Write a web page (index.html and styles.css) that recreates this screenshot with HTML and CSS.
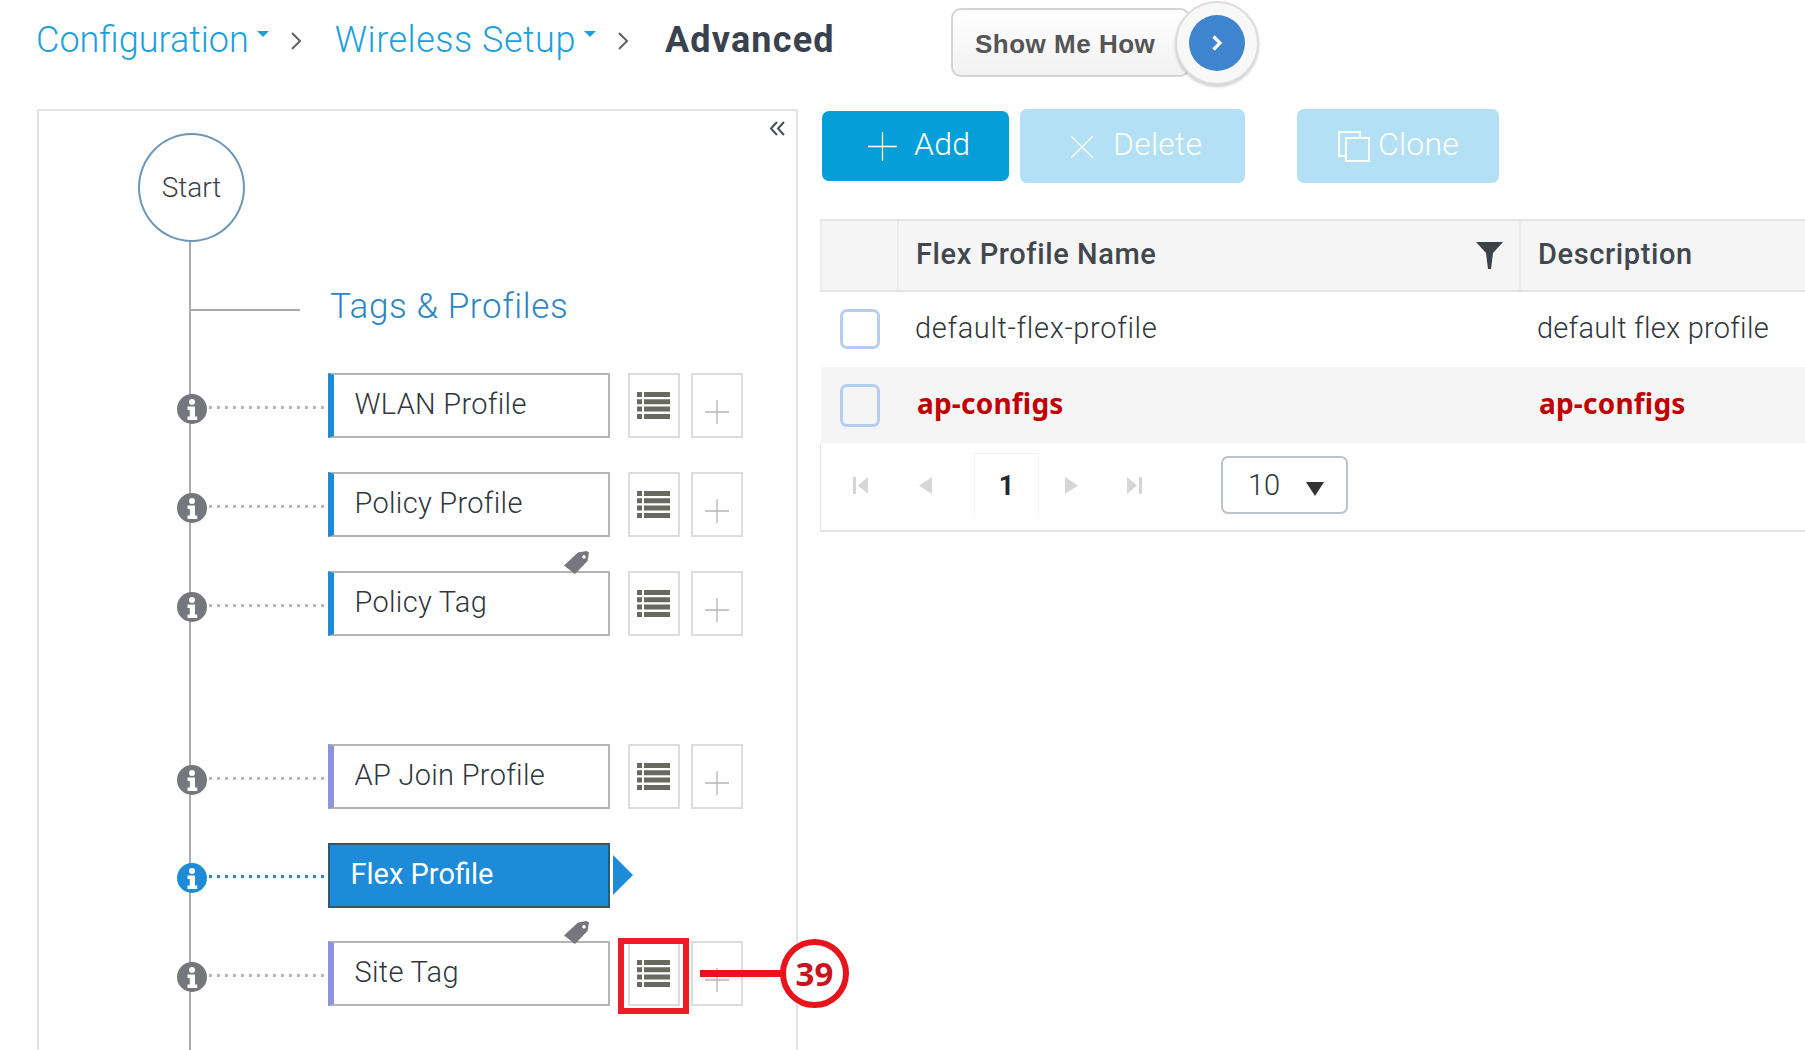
FILE: index.html
```html
<!DOCTYPE html>
<html lang="en">
<head>
<meta charset="UTF-8">
<title>Flex Profile</title>
<link rel="stylesheet" href="styles.css">
</head>

<body>

<svg class="defs">
    <defs>
        <symbol id="ico-info" viewBox="0 0 30 30">
            <circle cx="15" cy="15" r="15"/>
            <circle cx="15" cy="8" r="3" fill="#fff"/>
            <path d="M10.5 12.5h7.5v10h2.2v3.5h-9.700v-3.500h2.300v-6.500h-2.300z" fill="#fff"/>
        </symbol>
        <symbol id="ico-list" viewBox="0 0 33 27">
            <path d="M0 0h5v5H0zM7 0h26v5H7zM0 7.300h5v5H0zM7 7.300h26v5H7zM0 14.600h5v5H0zM7 14.600h26v5H7zM0 22h5v5H0zM7 22h26v5H7z"/>
        </symbol>
        <symbol id="ico-plus" viewBox="0 0 24 24">
            <path d="M12 0v24M0 12h24" fill="none" stroke="currentColor" stroke-width="1.300"/>
        </symbol>
        <symbol id="ico-tag" viewBox="0 0 25 23">
            <path d="M14 1.500 22.500 0 25 1.500 23.500 10 11 23 0 14.500zM20 4a1.800 1.800 0 1 0 .01 0z" fill-rule="evenodd"/>
        </symbol>
    </defs>
</svg>

<header class="topbar">
    <nav class="crumbs">
        <a class="crumb-link">Configuration</a><span class="caret"></span>
        <svg class="crumb-sep" viewBox="0 0 12 18"><path d="M2 1l8 8-8 8" fill="none" stroke="#5f6368" stroke-width="2"/></svg>
        <a class="crumb-link crumb-wide">Wireless Setup</a><span class="caret"></span>
        <svg class="crumb-sep" viewBox="0 0 12 18"><path d="M2 1l8 8-8 8" fill="none" stroke="#5f6368" stroke-width="2"/></svg>
        <span class="crumb-current">Advanced</span>
    </nav>
    <div class="howto">
        <span class="howto-label">Show Me How</span>
        <span class="howto-ring">
            <span class="howto-dot">
                <svg viewBox="0 0 12 16" width="12" height="16"><path d="M2.500 1.500 9 8l-6.500 6.500" fill="none" stroke="#fff" stroke-width="3.200"/></svg>
            </span>
        </span>
    </div>
</header>

<main class="layout">

    <!-- Left tree -->
    <section class="tree">
        <svg class="collapse" viewBox="0 0 17 15"><path d="M8 1 2 7.500 8 14M15 1 9 7.500 15 14" fill="none" stroke="#4a4f55" stroke-width="2"/></svg>
        <div class="start">Start</div>
        <div class="trunk">
            <div class="branch">
                <span class="branch-line"></span>
                <span class="branch-title">Tags &amp; Profiles</span>
            </div>

            <div class="group">
                <div class="row">
                    <svg class="info"><use href="#ico-info"/></svg>
                    <span class="dots"></span>
                    <div class="node node-blue">WLAN Profile</div>
                    <div class="tool"><svg class="ico-list"><use href="#ico-list"/></svg></div>
                    <div class="tool tool-plus"><svg class="ico-plus"><use href="#ico-plus"/></svg></div>
                </div>
                <div class="row">
                    <svg class="info"><use href="#ico-info"/></svg>
                    <span class="dots"></span>
                    <div class="node node-blue">Policy Profile</div>
                    <div class="tool"><svg class="ico-list"><use href="#ico-list"/></svg></div>
                    <div class="tool tool-plus"><svg class="ico-plus"><use href="#ico-plus"/></svg></div>
                </div>
                <div class="row">
                    <svg class="info"><use href="#ico-info"/></svg>
                    <span class="dots"></span>
                    <div class="node node-blue">Policy Tag<svg class="tag"><use href="#ico-tag"/></svg></div>
                    <div class="tool"><svg class="ico-list"><use href="#ico-list"/></svg></div>
                    <div class="tool tool-plus"><svg class="ico-plus"><use href="#ico-plus"/></svg></div>
                </div>
            </div>

            <div class="group group-second">
                <div class="row">
                    <svg class="info"><use href="#ico-info"/></svg>
                    <span class="dots"></span>
                    <div class="node node-violet">AP Join Profile</div>
                    <div class="tool"><svg class="ico-list"><use href="#ico-list"/></svg></div>
                    <div class="tool tool-plus"><svg class="ico-plus"><use href="#ico-plus"/></svg></div>
                </div>
                <div class="row row-active">
                    <svg class="info"><use href="#ico-info"/></svg>
                    <span class="dots"></span>
                    <div class="node node-active">Flex Profile</div>
                    <span class="node-arrow"></span>
                </div>
                <div class="row">
                    <svg class="info"><use href="#ico-info"/></svg>
                    <span class="dots"></span>
                    <div class="node node-violet">Site Tag<svg class="tag"><use href="#ico-tag"/></svg></div>
                    <div class="tool tool-marked"><svg class="ico-list"><use href="#ico-list"/></svg></div>
                    <div class="tool tool-plus"><svg class="ico-plus"><use href="#ico-plus"/></svg></div>
                    <div class="callout">
                        <span class="callout-line"></span>
                        <span class="callout-num">39</span>
                    </div>
                </div>
            </div>
        </div>
    </section>

    <!-- Right table -->
    <section class="pane">
        <div class="toolbar">
            <button class="btn btn-add">
                <svg class="btn-ico-add" viewBox="0 0 29 29"><path d="M14.500 0v29M0 14.500h29" fill="none" stroke="#fff" stroke-width="1.300"/></svg>Add
            </button>
            <button class="btn btn-off btn-delete">
                <svg class="btn-ico-del" viewBox="0 0 24 22"><path d="M1 0l22 22M23 0 1 22" fill="none" stroke="#fff" stroke-width="1.300"/></svg>Delete
            </button>
            <button class="btn btn-off btn-clone">
                <svg class="btn-ico-clone" viewBox="0 0 32 31"><path d="M8 7h23v23H8zM8 25H1V1h21v6" fill="none" stroke="#fff" stroke-width="2"/></svg>Clone
            </button>
        </div>

        <table class="grid">
            <colgroup>
                <col class="col-check">
                <col class="col-name">
                <col>
            </colgroup>
            <thead>
                <tr>
                    <th></th>
                    <th>
                        <div class="th-inner">Flex Profile Name
                            <svg class="filter" viewBox="0 0 27 27"><path d="M0 0h27L17 11l-2 16h-3l-2-16z"/></svg>
                        </div>
                    </th>
                    <th>Description</th>
                </tr>
            </thead>
            <tbody>
                <tr class="row-plain">
                    <td><span class="check"></span></td>
                    <td>default-flex-profile</td>
                    <td class="td-desc">default flex profile</td>
                </tr>
                <tr class="row-hit">
                    <td><span class="check check-tall"></span></td>
                    <td class="hit">ap-configs</td>
                    <td class="hit">ap-configs</td>
                </tr>
            </tbody>
        </table>

        <div class="pager">
            <svg class="pg pg-first" viewBox="0 0 15 17"><path d="M0 0h3v17H0zM15 0v17L5 8.500z"/></svg>
            <svg class="pg pg-prev" viewBox="0 0 13 17"><path d="M13 0v17L0 8.500z"/></svg>
            <span class="pg-num">1</span>
            <svg class="pg pg-next" viewBox="0 0 13 17"><path d="M0 0v17l13-8.500z"/></svg>
            <svg class="pg pg-last" viewBox="0 0 15 17"><path d="M12 0h3v17h-3zM0 0v17l10-8.500z"/></svg>
            <div class="pg-size">10<span class="pg-size-arrow"></span></div>
        </div>
    </section>

</main>

</body>
</html>
```

FILE: styles.css
```css
body {
    margin: 0;
    height: 1050px;
    overflow: hidden;
    background: #fff;
    font-family: Roboto, "Liberation Sans", sans-serif;
    font-weight: 300;
    color: #3c4248;
}

.defs {
    display: none;
}

/* Top bar */
.topbar {
    display: flex;
    height: 109px;
    padding-left: 36px;
}

.crumbs {
    display: flex;
    align-items: center;
    height: 80px;
    width: 915px;
    font-size: 36px;
}

.crumb-link {
    color: #1e9fdc;
}

.crumb-wide {
    letter-spacing: 0.5px;
}

.caret {
    width: 0;
    height: 0;
    margin: -12px 0 0 8px;
    border-left: 6px solid transparent;
    border-right: 6px solid transparent;
    border-top: 6px solid #1e9fdc;
}

.crumb-sep {
    width: 12px;
    height: 18px;
    margin: 2px 33px 0 21px;
}

.crumb-current {
    margin-left: 3px;
    font-weight: 700;
    letter-spacing: 1.2px;
    color: #39424e;
}

.howto {
    display: flex;
    align-items: center;
    height: 85px;
}

.howto-label {
    display: flex;
    align-items: center;
    width: 239px;
    height: 69px;
    padding: 3px 0 0 22px;
    box-sizing: border-box;
    border: 2px solid #d4d4d4;
    border-radius: 10px;
    background: linear-gradient(#fff, #f1f1f1);
    font-family: "Liberation Sans", sans-serif;
    font-size: 26px;
    font-weight: 700;
    letter-spacing: 0.5px;
    color: #555;
}

.howto-ring {
    display: flex;
    align-items: center;
    justify-content: center;
    width: 84px;
    height: 84px;
    margin-left: -15px;
    box-sizing: border-box;
    border: 2px solid #ddd;
    border-radius: 50%;
    background: #f8f8f8;
    box-shadow: 0 2px 3px rgba(0,0,0,0.2);
}

.howto-dot {
    display: flex;
    align-items: center;
    justify-content: center;
    width: 56px;
    height: 56px;
    border-radius: 50%;
    background: #3f84cf;
}

/* Main layout */
.layout {
    display: flex;
    height: 941px;
}

.tree {
    position: relative;
    display: flex;
    flex-direction: column;
    width: 761px;
    margin-left: 37px;
    box-sizing: border-box;
    border: 2px solid #e2e2e2;
    border-width: 2px 2px 0 2px;
}

.collapse {
    position: absolute;
    top: 10px;
    right: 10px;
    width: 17px;
    height: 15px;
}

.start {
    display: flex;
    align-items: center;
    justify-content: center;
    width: 107px;
    height: 109px;
    margin: 22px 0 0 99px;
    box-sizing: border-box;
    border: 2px solid #6d97b5;
    border-radius: 50%;
    font-size: 28px;
    color: #3c4248;
}

.trunk {
    flex: 1;
    margin-left: 150px;
    border-left: 2px solid #aaa;
}

.branch {
    display: flex;
    align-items: center;
    height: 44px;
    margin-top: 44px;
}

.branch-line {
    width: 109px;
    height: 2px;
    margin-top: 4px;
    background: #aaa;
}

.branch-title {
    margin: -4px 0 0 30px;
    font-size: 35px;
    letter-spacing: 0.6px;
    color: #2e86c1;
}

.group {
    display: flex;
    flex-direction: column;
    gap: 34px;
    margin: 43px 0 0 -14.500px;
}

.group-second {
    gap: 33.500px;
    margin-top: 108px;
}

.row {
    position: relative;
    display: flex;
    align-items: center;
    height: 65px;
}

.info {
    flex: none;
    width: 30px;
    height: 30px;
    margin-top: 6px;
    fill: #76777d;
}

.dots {
    width: 115px;
    height: 3px;
    margin: 3px 0 0 2px;
    background: repeating-linear-gradient(90deg, #b5b5b5 0 3px, transparent 3px 8px);
}

.node {
    position: relative;
    display: flex;
    align-items: center;
    width: 282px;
    height: 65px;
    margin-left: 4px;
    padding: 0 0 3px 21px;
    box-sizing: border-box;
    border: 2px solid #b4b4b4;
    border-left: 6px solid #1e8bd8;
    font-size: 29px;
    font-weight: 300;
    letter-spacing: 0.3px;
    color: #30363c;
}

.node-violet {
    border-left-color: #8e94dc;
}

.node-active {
    padding-left: 21px;
    border: 2px solid #2c5a70;
    background: #1e8bd8;
    font-weight: 400;
    letter-spacing: 0;
    color: #fff;
}

.node-arrow {
    width: 0;
    height: 0;
    margin-left: 3px;
    border-left: 20px solid #1e8bd8;
    border-top: 20px solid transparent;
    border-bottom: 20px solid transparent;
}

.row-active .info {
    fill: #1e8bd8;
}

.row-active .dots {
    background: repeating-linear-gradient(90deg, #2a86b8 0 3px, transparent 3px 8px);
}

.tag {
    position: absolute;
    top: -22px;
    right: 19px;
    width: 25px;
    height: 23px;
    fill: #76777d;
}

.tool {
    position: relative;
    display: flex;
    align-items: center;
    justify-content: center;
    width: 52px;
    height: 65px;
    margin-left: 18px;
    box-sizing: border-box;
    border: 2px solid #ddd;
}

.tool-plus {
    margin-left: 11px;
    padding-top: 12px;
    color: #b5b5b5;
}

.ico-list {
    width: 33px;
    height: 27px;
    fill: #696a5f;
}

.ico-plus {
    width: 24px;
    height: 24px;
}

/* Annotation drawn over the screenshot */
.tool-marked::after {
    content: "";
    position: absolute;
    top: -5px;
    left: -12px;
    width: 59px;
    height: 64px;
    border: 6px solid #ec1c24;
}

.callout {
    position: absolute;
    top: -2px;
    left: 523.500px;
    display: flex;
    align-items: center;
    height: 69px;
}

.callout-line {
    width: 81px;
    height: 7px;
    background: #e8141c;
}

.callout-num {
    display: flex;
    align-items: center;
    justify-content: center;
    width: 69px;
    height: 69px;
    margin-left: -1px;
    box-sizing: border-box;
    border: 6px solid #e8141c;
    border-radius: 50%;
    background: #fff;
    font-family: "Noto Sans", sans-serif;
    font-size: 33px;
    font-weight: 700;
    color: #c8141c;
}

/* Right pane */
.pane {
    flex: 1;
    margin-left: 22px;
}

.toolbar {
    display: flex;
    align-items: center;
    height: 74px;
}

.btn {
    display: flex;
    align-items: center;
    box-sizing: border-box;
    border: none;
    border-radius: 7px;
    padding-bottom: 5px;
    font-family: inherit;
    font-size: 32px;
    font-weight: 300;
    letter-spacing: 0.2px;
    color: #fff;
}

.btn svg {
    margin-top: 5px;
}

.btn-add {
    width: 187px;
    height: 70px;
    margin-left: 2px;
    padding-left: 46px;
    background: #049fd9;
}

.btn-off {
    height: 74px;
    background: #b3e0f4;
}

.btn-delete {
    width: 225px;
    margin-left: 11px;
    padding-left: 50px;
}

.btn-clone {
    width: 202px;
    margin-left: 52px;
    padding-left: 41px;
}

.btn-ico-add {
    width: 29px;
    height: 29px;
    margin-right: 17px;
}

.btn-ico-del {
    width: 24px;
    height: 22px;
    margin-right: 19px;
}

.btn-ico-clone {
    width: 32px;
    height: 31px;
    margin-right: 8px;
}

.grid {
    width: 985px;
    margin-top: 36px;
    table-layout: fixed;
    border-collapse: collapse;
    font-size: 29px;
    color: #41474d;
}

.col-check {
    width: 77px;
}

.col-name {
    width: 622px;
}

.grid th {
    height: 71px;
    padding: 0 0 4px 17px;
    background: #f5f5f5;
    border-top: 2px solid #e4e4e4;
    border-bottom: 2px solid #e4e4e4;
    border-left: 2px solid #ececec;
    box-sizing: border-box;
    font-weight: 500;
    letter-spacing: 0.6px;
    text-align: left;
}

.th-inner {
    display: flex;
    align-items: center;
    justify-content: space-between;
    padding-right: 16px;
}

.filter {
    width: 27px;
    height: 27px;
    margin-top: 3px;
    fill: #3c4248;
}

.grid td {
    height: 71px;
    padding: 0 0 3px 17px;
    font-weight: 300;
    letter-spacing: 0.65px;
    color: #30363c;
}

.grid .row-plain td {
    height: 72px;
}

.grid td:first-child {
    padding: 0 0 2px 19px;
}

.grid td.td-desc {
    letter-spacing: 0.25px;
}

.row-hit td {
    background: #f5f5f5;
}

.grid td.hit {
    padding: 0 0 5px 19px;
    font-family: "Noto Sans", sans-serif;
    font-size: 28px;
    font-weight: 700;
    letter-spacing: 0.2px;
    color: #c00000;
}

.check {
    display: block;
    width: 40px;
    height: 40px;
    box-sizing: border-box;
    border: 3px solid #b5cdf0;
    border-radius: 7px;
    background: #fff;
}

.check-tall {
    height: 43px;
    margin-top: 2px;
    background: #f5f5f5;
}

.pager {
    display: flex;
    align-items: center;
    height: 89px;
    width: 985px;
    padding-bottom: 3px;
    box-sizing: border-box;
    border-left: 1px solid #e4e4e4;
    border-bottom: 2px solid #e4e4e4;
}

.pg {
    fill: #d6d6d6;
    height: 17px;
}

.pg-first {
    width: 15px;
    margin-left: 32px;
}

.pg-prev {
    width: 13px;
    margin-left: 51px;
}

.pg-num {
    display: flex;
    align-items: center;
    justify-content: center;
    width: 65px;
    height: 65px;
    margin-left: 42px;
    border-top: 1px solid #eee;
    border-left: 1px solid #f4f4f4;
    border-right: 1px solid #f4f4f4;
    box-sizing: border-box;
    font-size: 27px;
    font-weight: 700;
    color: #23282e;
}

.pg-next {
    width: 13px;
    margin-left: 26px;
}

.pg-last {
    width: 15px;
    margin-left: 49px;
}

.pg-size {
    display: flex;
    align-items: center;
    width: 127px;
    height: 58px;
    margin-left: 79px;
    padding-left: 25px;
    box-sizing: border-box;
    border: 2px solid #b9c4cc;
    border-radius: 7px;
    font-size: 29px;
    font-weight: 300;
    color: #30363c;
}

.pg-size-arrow {
    width: 0;
    height: 0;
    margin: 8px 0 0 26px;
    border-left: 9px solid transparent;
    border-right: 9px solid transparent;
    border-top: 14px solid #333;
}
```
